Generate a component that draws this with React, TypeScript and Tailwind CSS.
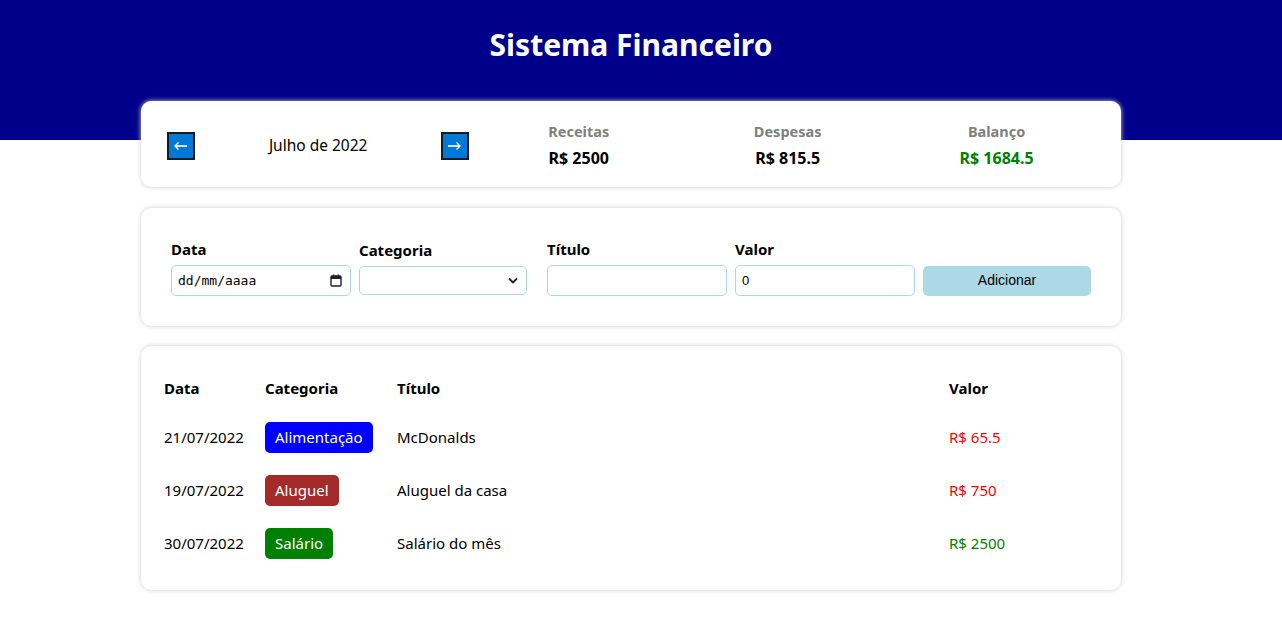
import React from "react";

const font = { fontFamily: '"Noto Sans", "Open Sans", sans-serif' };

function ArrowBtn({ dir }: { dir: "left" | "right" }) {
  return (
    <div className="w-[28px] h-[28px] border-2 border-[#1a1a1a] bg-[#0078d7] flex items-center justify-center">
      <svg width="16" height="10" viewBox="0 0 16 10">
        {dir === "left" ? (
          <>
            <path d="M2 5 H14" stroke="white" strokeWidth="1.6" />
            <path d="M5.5 1.5 L2 5 L5.5 8.5" stroke="white" strokeWidth="1.4" fill="none" />
          </>
        ) : (
          <>
            <path d="M1 5 H13" stroke="white" strokeWidth="1.6" />
            <path d="M9.5 1.5 L13 5 L9.5 8.5" stroke="white" strokeWidth="1.4" fill="none" />
          </>
        )}
      </svg>
    </div>
  );
}

function Stat({ title, value, color }: { title: string; value: string; color: string }) {
  return (
    <div className="flex-1 flex flex-col items-center">
      <div className="font-bold text-[14.5px] text-[#808080] leading-[21px]">{title}</div>
      <div className={`font-bold text-[16px] leading-[21px] mt-[6px] ${color}`}>{value}</div>
    </div>
  );
}

const rows = [
  { date: "21/07/2022", cat: "Alimentação", catBg: "bg-[#0000ff]", title: "McDonalds", value: "R$ 65.5", color: "text-[#ff0000]" },
  { date: "19/07/2022", cat: "Aluguel", catBg: "bg-[#a52a2a]", title: "Aluguel da casa", value: "R$ 750", color: "text-[#ff0000]" },
  { date: "30/07/2022", cat: "Salário", catBg: "bg-[#008000]", title: "Salário do mês", value: "R$ 2500", color: "text-[#008000]" },
];

const btnFont = { fontFamily: '"Liberation Sans", Arial, sans-serif' };

export default function App() {
  return (
    <div className="min-h-[624px] bg-white text-black" style={font}>
      <div className="h-[140px] bg-[#00008b] pt-[24px]">
        <div className="w-[1262px] flex justify-center">
          <h1 className="text-white font-bold text-[30px] leading-[42px] m-0">Sistema Financeiro</h1>
        </div>
      </div>
      <div className="w-[980px] ml-[141px] -mt-[39px] pb-[34px]">
        {/* Info card */}
        <div className="bg-white rounded-[10px] shadow-[0_0_5px_#cccccc] px-[20px] pt-[20px] flex items-start h-[86px]">
          <div className="flex-1 mt-[11px]">
            <div className="flex items-center justify-between ml-[6px] mr-[5px]">
              <ArrowBtn dir="left" />
              <div className="text-[15.5px]">Julho de 2022</div>
              <ArrowBtn dir="right" />
            </div>
          </div>
          <div className="flex-[2] flex">
            <Stat title="Receitas" value="R$ 2500" color="text-black" />
            <Stat title="Despesas" value="R$ 815.5" color="text-black" />
            <Stat title="Balanço" value="R$ 1684.5" color="text-[#008000]" />
          </div>
        </div>

        {/* Input card */}
        <div className="bg-white rounded-[10px] shadow-[0_0_5px_#cccccc] mt-[21px] px-[20px] pt-[31px] pb-[30px] grid grid-cols-5 items-center">
          <div className="flex flex-col pl-[10px]">
            <div className="font-bold text-[15px] leading-[21px] mb-[5px]">Data</div>
            <div className="w-[180px] h-[31px] border border-[#add8e6] rounded-[5px] flex items-center justify-between pl-[6px] pr-[8px]">
              <span className="text-[13px]" style={{ fontFamily: '"DejaVu Sans Mono", monospace' }}>dd/mm/aaaa</span>
              <svg width="12" height="13" viewBox="0 0 12 13">
                <rect x="1" y="2" width="10" height="10" rx="1" fill="none" stroke="#222" strokeWidth="1.4" />
                <rect x="1" y="2" width="10" height="3" fill="#222" />
                <rect x="3" y="0.5" width="1.4" height="2" fill="#222" />
                <rect x="7.6" y="0.5" width="1.4" height="2" fill="#222" />
              </svg>
            </div>
          </div>
          <div className="flex flex-col pl-[10px]">
            <div className="font-bold text-[15px] leading-[21px] mb-[5px]">Categoria</div>
            <div className="w-[168px] h-[29px] border border-[#add8e6] rounded-[5px] flex items-center justify-end pr-[8px]">
              <svg width="10" height="7" viewBox="0 0 10 7">
                <path d="M1 1.5 L5 5.5 L9 1.5" stroke="#222" strokeWidth="1.8" fill="none" />
              </svg>
            </div>
          </div>
          <div className="flex flex-col pl-[10px]">
            <div className="font-bold text-[15px] leading-[21px] mb-[5px]">Título</div>
            <div className="w-[180px] h-[31px] border border-[#add8e6] rounded-[5px]" />
          </div>
          <div className="flex flex-col pl-[10px]">
            <div className="font-bold text-[15px] leading-[21px] mb-[5px]">Valor</div>
            <div className="w-[180px] h-[31px] border border-[#add8e6] rounded-[5px] flex items-center pl-[6px]">
              <span className="text-[13px]" style={btnFont}>0</span>
            </div>
          </div>
          <div className="flex flex-col pl-[10px]">
            <div className="h-[21px] mb-[5px]" />
            <div className="w-[168px] h-[30px] bg-[#add8e6] rounded-[5px] flex items-center justify-center text-[14px]" style={btnFont}>
              Adicionar
            </div>
          </div>
        </div>

        {/* Table card */}
        <div className="bg-white rounded-[10px] shadow-[0_0_5px_#cccccc] mt-[20px] px-[23px] pt-[20px] pb-[20px]">
          <div className="grid grid-cols-[101px_132px_1fr_149px] h-[45px] items-center font-bold text-[15px]">
            <div>Data</div>
            <div>Categoria</div>
            <div>Título</div>
            <div>Valor</div>
          </div>
          {rows.map((r) => (
            <div key={r.date} className="grid grid-cols-[101px_132px_1fr_149px] h-[53px] items-center text-[15px]">
              <div>{r.date}</div>
              <div>
                <span className={`inline-flex items-center h-[31px] px-[10px] rounded-[5px] text-white ${r.catBg}`}>{r.cat}</span>
              </div>
              <div>{r.title}</div>
              <div className={r.color}>{r.value}</div>
            </div>
          ))}
        </div>
      </div>
    </div>
  );
}
